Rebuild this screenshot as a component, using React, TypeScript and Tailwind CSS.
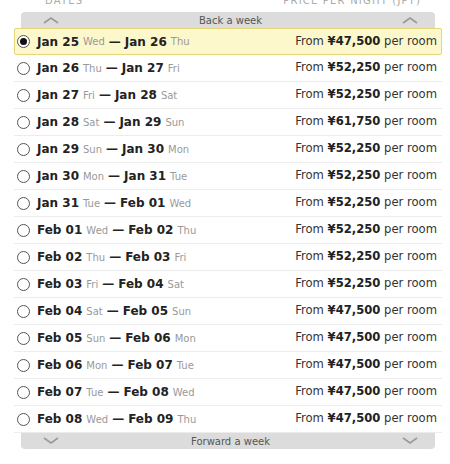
import React from "react";

const rows = [
  { from: "Jan 25", fromDay: "Wed", to: "Jan 26", toDay: "Thu", price: "47,500" },
  { from: "Jan 26", fromDay: "Thu", to: "Jan 27", toDay: "Fri", price: "52,250" },
  { from: "Jan 27", fromDay: "Fri", to: "Jan 28", toDay: "Sat", price: "52,250" },
  { from: "Jan 28", fromDay: "Sat", to: "Jan 29", toDay: "Sun", price: "61,750" },
  { from: "Jan 29", fromDay: "Sun", to: "Jan 30", toDay: "Mon", price: "52,250" },
  { from: "Jan 30", fromDay: "Mon", to: "Jan 31", toDay: "Tue", price: "52,250" },
  { from: "Jan 31", fromDay: "Tue", to: "Feb 01", toDay: "Wed", price: "52,250" },
  { from: "Feb 01", fromDay: "Wed", to: "Feb 02", toDay: "Thu", price: "52,250" },
  { from: "Feb 02", fromDay: "Thu", to: "Feb 03", toDay: "Fri", price: "52,250" },
  { from: "Feb 03", fromDay: "Fri", to: "Feb 04", toDay: "Sat", price: "52,250" },
  { from: "Feb 04", fromDay: "Sat", to: "Feb 05", toDay: "Sun", price: "47,500" },
  { from: "Feb 05", fromDay: "Sun", to: "Feb 06", toDay: "Mon", price: "47,500" },
  { from: "Feb 06", fromDay: "Mon", to: "Feb 07", toDay: "Tue", price: "47,500" },
  { from: "Feb 07", fromDay: "Tue", to: "Feb 08", toDay: "Wed", price: "47,500" },
  { from: "Feb 08", fromDay: "Wed", to: "Feb 09", toDay: "Thu", price: "47,500" },
];

function Chevron({ up }: { up?: boolean }) {
  return (
    <svg width="16" height="8" viewBox="0 0 16 8" className="text-[#9a9a9a]">
      <path
        d={up ? "M1 7 L8 2 L15 7" : "M1 1 L8 6 L15 1"}
        fill="none"
        stroke="currentColor"
        strokeWidth="1.6"
      />
    </svg>
  );
}

function Radio({ checked }: { checked?: boolean }) {
  return (
    <span className="w-[13px] h-[13px] rounded-full border border-[#555] bg-white flex items-center justify-center shrink-0">
      {checked && <span className="w-[7px] h-[7px] rounded-full bg-[#111]" />}
    </span>
  );
}

export default function App() {
  return (
    <div className="w-[450px] h-[464px] bg-white overflow-hidden font-['DejaVu_Sans',Verdana,sans-serif] text-[#333]">
      <div className="flex justify-between h-[12px] -mt-[5px] pl-[45px] pr-[29px] text-[10px] leading-[12px] tracking-[1.2px] text-[#aaa]">
        <span>DATES</span>
        <span>PRICE PER NIGHT (JPY)</span>
      </div>

      <div className="ml-[21px] mr-[15px] mt-[5px] h-[16px] bg-[#dcdcdc] rounded-t-[4px] flex items-center justify-between pl-[22px] pr-[17px] text-[10px] text-[#555]">
        <Chevron up />
        <span>Back a week</span>
        <Chevron up />
      </div>

      <div className="mx-[14px] w-[428px]">
        {rows.map((r, i) => (
          <div
            key={i}
            className={
              i === 0
                ? "h-[27px] flex items-center justify-between pl-[2px] pr-[4px] bg-[#fdf8cc] border border-[#e6d67a] rounded-[2px]"
                : "h-[27px] flex items-center justify-between pl-[3px] pr-[5px] border-b border-[#ececec]"
            }
          >
            <div className="flex items-center">
              <Radio checked={i === 0} />
              <span className="ml-[7px] text-[12px] font-bold text-[#222]">{r.from}</span>
              <span className="ml-[4px] text-[10px] text-[#999]">{r.fromDay}</span>
              <span className="ml-[4px] text-[12px] font-bold text-[#222]">—</span>
              <span className="ml-[4px] text-[12px] font-bold text-[#222]">{r.to}</span>
              <span className="ml-[4px] text-[10px] text-[#999]">{r.toDay}</span>
            </div>
            <div className="text-[11.6px] text-[#333]">
              From <span className="font-bold text-[#222]">¥{r.price}</span> per room
            </div>
          </div>
        ))}
      </div>

      <div className="ml-[21px] mr-[15px] h-[16px] bg-[#dcdcdc] rounded-b-[4px] flex items-center justify-between pl-[22px] pr-[17px] text-[10px] text-[#555]">
        <Chevron />
        <span>Forward a week</span>
        <Chevron />
      </div>
    </div>
  );
}
